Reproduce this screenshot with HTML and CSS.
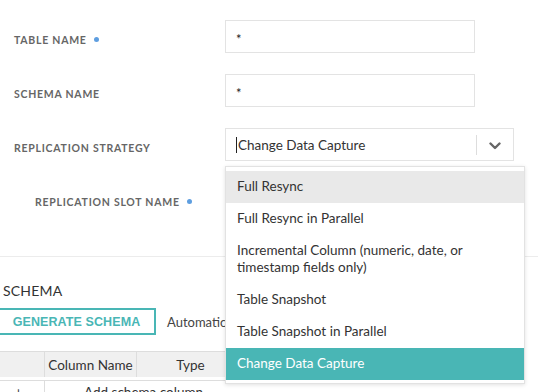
FILE: index.html
```html
<!DOCTYPE html>
<html lang="en">
<head>
    <meta charset="UTF-8">
    <title>Source Table</title>
    <link rel="stylesheet" href="styles.css">
</head>
<body>

    <div class="page">
        <!-- campos de la tabla -->
        <div class="fields">
            <div class="field">
                <label class="field-label">Table Name <span class="dot"></span></label>
                <div class="text-input">*</div>
            </div>
            <div class="field">
                <label class="field-label">Schema Name</label>
                <div class="text-input">*</div>
            </div>
            <div class="field">
                <label class="field-label">Replication Strategy</label>
                <div class="select-box">
                    <span class="select-value"><span class="caret"></span>Change Data Capture</span>
                    <span class="select-sep"></span>
                    <span class="select-arrow">
                        <svg width="12" height="8" viewBox="0 0 12 8"><path d="M1.5 1.5 L6 6 L10.5 1.5" fill="none" stroke="#666" stroke-width="2.4" stroke-linecap="round" stroke-linejoin="round"/></svg>
                    </span>
                </div>
            </div>
            <div class="field field-nested">
                <label class="field-label">Replication Slot Name <span class="dot"></span></label>
                <div class="text-input"></div>
            </div>
        </div>

        <hr class="divider">

        <!-- schema -->
        <div class="schema">
            <h2>Schema</h2>
            <div class="schema-actions">
                <button type="button" class="btn-outline">GENERATE SCHEMA</button>
                <span class="hint">Automatically generate schema</span>
            </div>
            <div class="table-wrap">
                <table class="schema-table">
                    <thead>
                        <tr>
                            <th class="col-add"></th>
                            <th class="col-name">Column Name</th>
                            <th class="col-type">Type</th>
                        </tr>
                    </thead>
                    <tbody>
                        <tr>
                            <td class="col-add">+</td>
                            <td colspan="2" class="add-row">Add schema column</td>
                        </tr>
                    </tbody>
                </table>
            </div>
        </div>

        <!-- menu abierto del select -->
        <ul class="dropdown">
            <li class="active-hover">Full Resync</li>
            <li>Full Resync in Parallel</li>
            <li>Incremental Column (numeric, date, or<br>timestamp fields only)</li>
            <li>Table Snapshot</li>
            <li>Table Snapshot in Parallel</li>
            <li class="selected">Change Data Capture</li>
        </ul>
    </div>

</body>
</html>
```

FILE: styles.css
```css
* {margin: 0; padding: 0; box-sizing: border-box;}

body {
    font-family: Lato, "Noto Sans", sans-serif;
    color: #333;
    background: #fff;
    overflow: hidden;
}

.page {
    position: relative;
    width: 538px;
    height: 392px;
    overflow: hidden;
}

.fields {
    padding-top: 20px;
    display: flex;
    flex-direction: column;
    gap: 21px;
}

.field {
    display: flex;
    align-items: center;
    height: 33px;
}

.field-label {
    width: 225px;
    padding-left: 14px;
    padding-top: 6px;
    font-size: 10.5px;
    font-weight: 700;
    letter-spacing: 0.75px;
    text-transform: uppercase;
    color: #666;
    display: flex;
    align-items: center;
}

.field-nested .field-label {
    padding-left: 35px;
}

.dot {
    display: inline-block;
    width: 5px;
    height: 5px;
    border-radius: 50%;
    background: #5e9ee0;
    margin-left: 7px;
}

.text-input {
    width: 250px;
    height: 33px;
    border: 1px solid #e3e3e3;
    padding: 10px 10px 0;
    font-size: 13px;
    color: #222;
}

.select-box {
    width: 289px;
    height: 33px;
    border: 1px solid #e3e3e3;
    display: flex;
    align-items: center;
}

.select-value {
    flex: 1;
    padding-left: 10px;
    font-size: 13.5px;
    color: #333;
    display: flex;
    align-items: center;
}

.caret {
    display: inline-block;
    width: 1px;
    height: 16px;
    background: #222;
    margin-right: 1px;
}

.select-sep {
    width: 1px;
    height: 20px;
    background: #ddd;
}

.select-arrow {
    width: 36px;
    display: flex;
    justify-content: center;
    padding-top: 2px;
}

.divider {
    border: none;
    border-top: 1px solid #ececec;
    margin-top: 41px;
}

.schema {
    padding-top: 25px;
}

.schema h2 {
    font-size: 14px;
    font-weight: 400;
    text-transform: uppercase;
    color: #333;
    padding-left: 3px;
    letter-spacing: 0.2px;
}

.schema-actions {
    width: 225px;
    overflow: hidden;
    display: flex;
    align-items: center;
    gap: 11px;
    margin-top: 9px;
}

.btn-outline {
    flex: none;
    margin-left: -4px;
    width: 160px;
    height: 27px;
    border: 2px solid #49b6b5;
    background: #fff;
    color: #49b6b5;
    font-family: "Liberation Sans", Arial, sans-serif;
    font-weight: 700;
    font-size: 12.5px;
    letter-spacing: 0.1px;
    padding-left: 1px;
}

.hint {
    font-size: 13px;
    color: #444;
    white-space: nowrap;
}

.table-wrap {
    width: 225px;
    overflow: hidden;
    margin-top: 16px;
}

.schema-table {
    table-layout: fixed;
    width: 252px;
    margin-left: -8px;
    border-collapse: collapse;
    font-size: 13.5px;
}

.schema-table th, .schema-table td {
    border: 1px solid #ddd;
    font-weight: 400;
    color: #333;
    text-align: center;
}

.schema-table th {
    background: #f0f0f0;
    height: 27px;
}

.schema-table tbody td {
    border-top: 3px solid #fff;
    box-shadow: inset 0 1px 0 #ddd;
    height: 24px;
    vertical-align: top;
    padding-top: 4px;
    white-space: nowrap;
}

.col-add {width: 52px;}
.col-name {width: 92px;}
.col-type {width: 108px;}

.add-row {
    text-align: left !important;
    padding-left: 39px;
}

.dropdown {
    position: absolute;
    left: 225px;
    top: 166px;
    width: 300px;
    list-style: none;
    background: #fff;
    border: 1px solid #e2e2e2;
    box-shadow: 0 1px 4px rgba(0,0,0,0.12);
    padding: 4px 0 3px;
    z-index: 10;
}

.dropdown li {
    font-size: 13.5px;
    line-height: 17px;
    color: #333;
    padding: 7px 11px 8px;
}

.dropdown li.active-hover {
    background: #e9e9e9;
}

.dropdown li.selected {
    background: #49b6b5;
    color: #fff;
}
```
